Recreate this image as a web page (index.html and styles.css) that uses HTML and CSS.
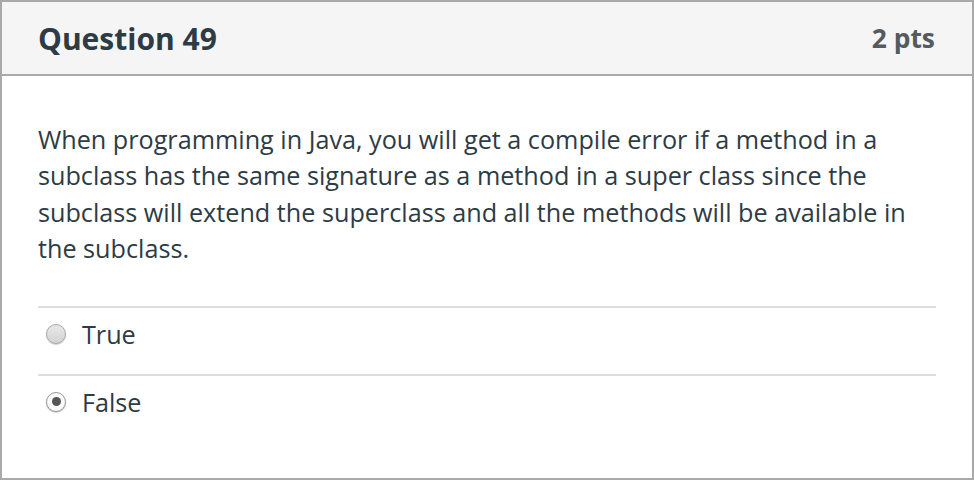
FILE: index.html
```html
<!DOCTYPE html>
<html>
<head>
<meta charset="utf-8">
<link rel="stylesheet" href="styles.css">
</head>
<body>
<div class="question">
  <div class="header">
    <h2 class="title">Question 49</h2>
    <span class="points">2 pts</span>
  </div>
  <div class="content">
    <p class="text">When programming in Java, you will get a compile error if a method in a subclass has the same signature as a method in a super class since the subclass will extend the superclass and all the methods will be available in the subclass.</p>
    <div class="answers">
      <div class="answer">
        <span class="radio"></span>
        <span class="label">True</span>
      </div>
      <div class="answer">
        <span class="radio checked"></span>
        <span class="label">False</span>
      </div>
    </div>
  </div>
</div>
</body>
</html>
```

FILE: styles.css
```css
html, body {
  margin: 0;
  padding: 0;
  background: #ffffff;
}
body {
  font-family: "Open Sans", "Noto Sans", sans-serif;
  color: #2d3b45;
}
.question {
  box-sizing: border-box;
  width: 974px;
  height: 480px;
  border: 2px solid #a9a9a9;
  background: #fff;
}
.header {
  display: flex;
  align-items: center;
  justify-content: space-between;
  height: 72px;
  padding: 0 37px 0 36px;
  background: #f5f5f5;
  border-bottom: 2px solid #a9a9a9;
}
.title {
  margin: 0;
  font-size: 30px;
  font-weight: 700;
  color: #2d3b45;
}
.points {
  font-size: 26.4px;
  font-weight: 700;
  color: #555a5e;
}
.content {
  padding: 45px 36px 0 36px;
}
.text {
  margin: 0;
  font-size: 25.2px;
  line-height: 36.4px;
}
.answers {
  margin-top: 39px;
}
.answer {
  display: flex;
  align-items: center;
  height: 52px;
  padding-bottom: 14px;
  border-top: 2px solid #dddddd;
}
.radio {
  box-sizing: border-box;
  width: 20px;
  height: 20px;
  margin: 0 16px 0 8px;
  border-radius: 50%;
  border: 1px solid #a6a6a6;
  background: linear-gradient(#e8e8e8, #d4d4d4);
  box-shadow: 0 1px 1px rgba(0,0,0,0.2);
  position: relative;
}
.radio.checked {
  background: #fafafa;
  border: 1px solid #999;
}
.radio.checked::after {
  content: "";
  position: absolute;
  left: 4.5px;
  top: 4.5px;
  width: 9px;
  height: 9px;
  border-radius: 50%;
  background: #555;
}
.label {
  font-size: 25.2px;
}
```
